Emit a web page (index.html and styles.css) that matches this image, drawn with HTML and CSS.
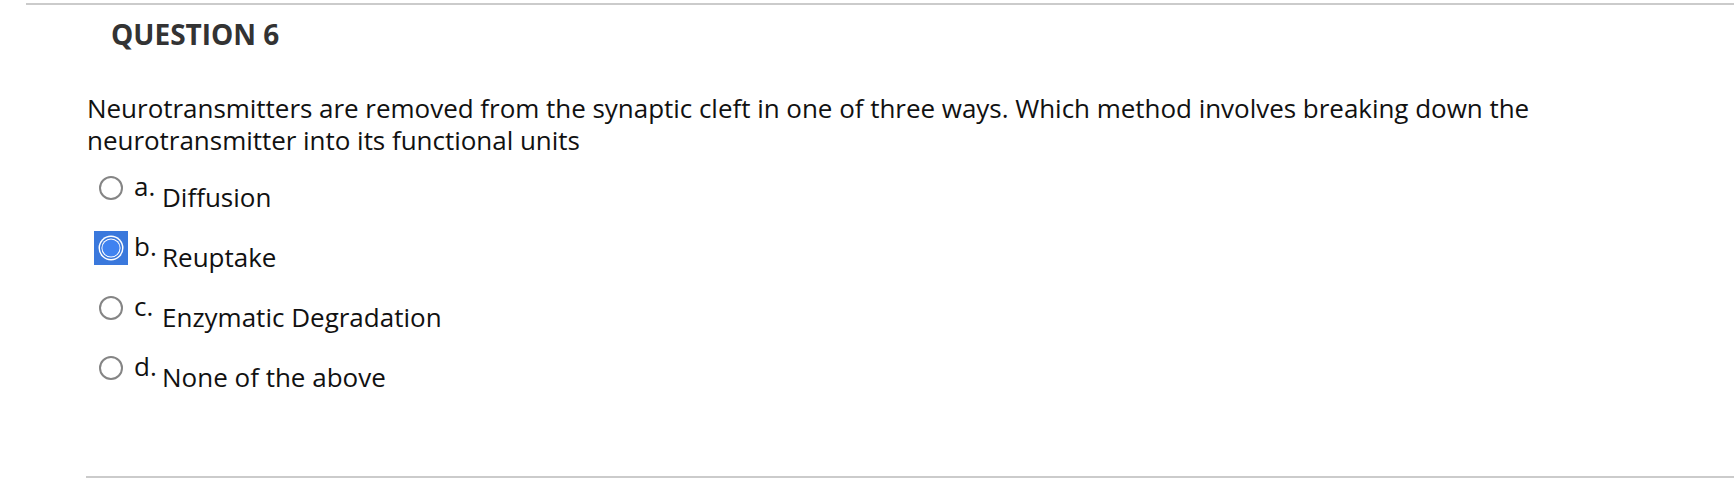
FILE: index.html
```html
<!DOCTYPE html>
<html lang="en">
<head>
<meta charset="utf-8">
<title>Question 6</title>
<link rel="stylesheet" href="styles.css">
</head>
<body>
<div class="rule-top"></div>
<div class="question">
  <h3 class="q-title">QUESTION 6</h3>
  <p class="q-text">Neurotransmitters are removed from the synaptic cleft in one of three ways. Which method involves breaking down the neurotransmitter into its functional units</p>
  <ul class="answers">
    <li class="answer">
      <span class="radio-box"><span class="radio"></span></span>
      <span class="letter">a.</span>
      <span class="answer-text">Diffusion</span>
    </li>
    <li class="answer">
      <span class="radio-box">
        <svg class="radio-checked" width="34" height="34" viewBox="0 0 34 34">
          <rect x="0" y="0" width="34" height="34" fill="#3a78dc"/>
          <circle cx="17" cy="17" r="12.5" fill="#ffffff"/>
          <circle cx="17" cy="17" r="11" fill="#3a78dc"/>
          <circle cx="17" cy="17" r="9.6" fill="#ffffff"/>
          <circle cx="17" cy="17" r="8.6" fill="#3f82f0"/>
        </svg>
      </span>
      <span class="letter">b.</span>
      <span class="answer-text">Reuptake</span>
    </li>
    <li class="answer">
      <span class="radio-box"><span class="radio"></span></span>
      <span class="letter">c.</span>
      <span class="answer-text">Enzymatic Degradation</span>
    </li>
    <li class="answer">
      <span class="radio-box"><span class="radio"></span></span>
      <span class="letter">d.</span>
      <span class="answer-text">None of the above</span>
    </li>
  </ul>
</div>
<div class="rule-bottom"></div>
</body>
</html>
```

FILE: styles.css
```css
html, body {
  margin: 0;
  padding: 0;
  background: #ffffff;
}

body {
  font-family: "Open Sans", "Noto Sans", sans-serif;
  color: #111111;
  width: 1734px;
  height: 492px;
  overflow: hidden;
}

.rule-top {
  margin-top: 3px;
  margin-left: 26px;
  height: 2px;
  background: #cbcbcb;
}

.question {
  margin-left: 26px;
  padding: 10px 0 0 61px;
  height: 471px;
  box-sizing: border-box;
}

.q-title {
  margin: 0 0 0 24px;
  font-size: 28px;
  line-height: 38px;
  font-weight: 700;
  color: #333333;
}

.q-text {
  margin: 39px 0 0 0;
  max-width: 1450px;
  font-size: 26px;
  line-height: 32px;
  letter-spacing: -0.03px;
  color: #111111;
}

.answers {
  list-style: none;
  margin: 14px 0 0 0;
  padding: 0;
}

.answer {
  display: flex;
  align-items: flex-start;
  height: 60px;
}

.radio-box {
  width: 34px;
  height: 34px;
  margin-left: 7px;
  margin-top: 1px;
  display: flex;
  align-items: center;
  justify-content: center;
}

.radio {
  width: 24px;
  height: 24px;
  box-sizing: border-box;
  border: 2px solid #858585;
  border-radius: 50%;
  background: #ffffff;
}

.radio-checked {
  display: block;
}

.letter {
  font-size: 26px;
  line-height: 32px;
  margin-left: 6px;
  width: 28px;
}

.answer-text {
  font-size: 26px;
  line-height: 32px;
  margin-top: 11px;
}

.rule-bottom {
  margin-left: 86px;
  height: 2px;
  background: #cbcbcb;
}
```
